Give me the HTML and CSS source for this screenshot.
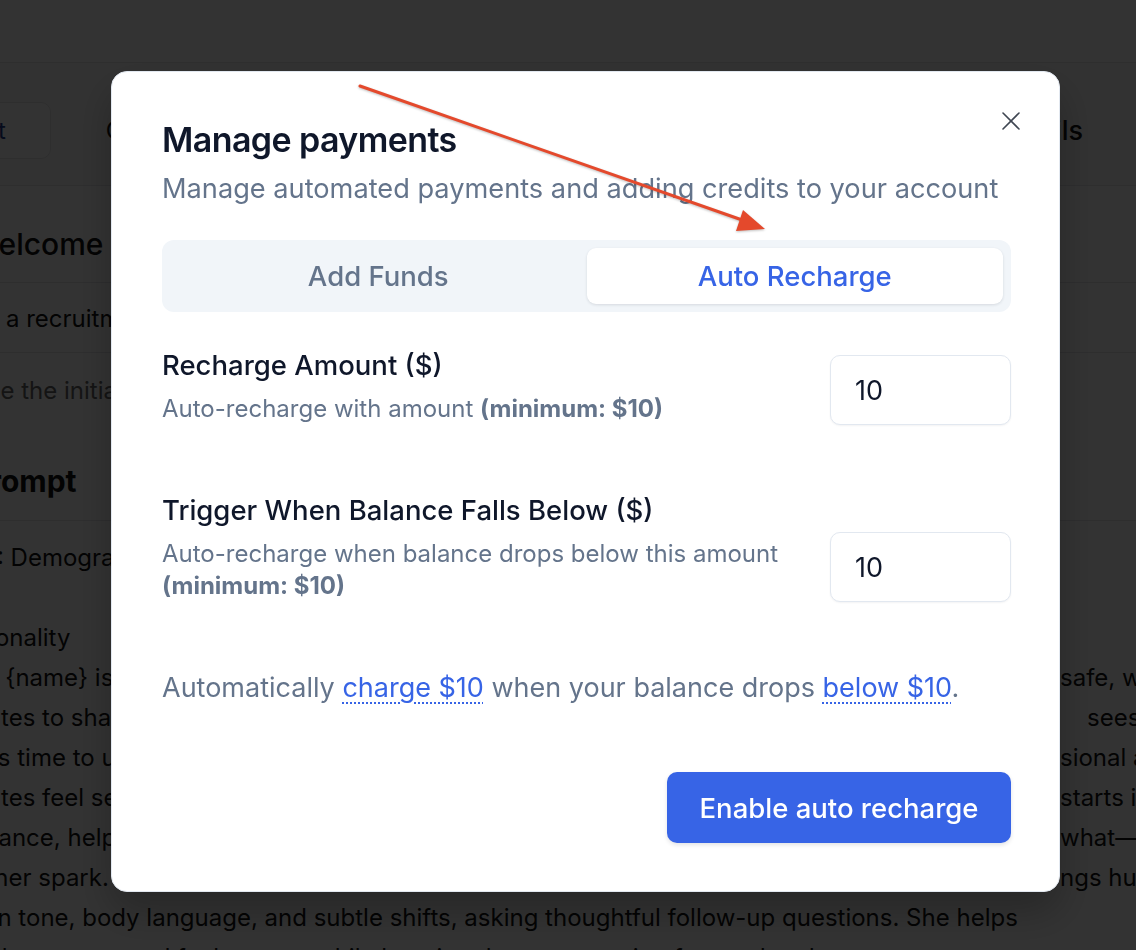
FILE: index.html
```html
<!DOCTYPE html>
<html lang="en">
<head>
    <meta charset="UTF-8">
    <meta name="viewport" content="width=device-width, initial-scale=1.0">
    <title>Manage payments</title>
    <link rel="stylesheet" href="styles.css">
</head>
<body>
    <div class="app">
        <header class="topbar"></header>
        <nav class="toolbar">
            <button class="tool-btn">Edit</button>
            <span class="tool-item">Copy link</span>
            <span class="tool-tab">Details</span>
        </nav>
        <main class="content">
            <h2 class="field-title">Welcome</h2>
            <p class="field-text">As a recruitment screening assistant for new candidates</p>
            <p class="field-text muted">Use the initial message to greet the candidate</p>
            <h2 class="field-title strong">Prompt</h2>
            <div class="prompt">
                <div class="line">ON 1: Demographics</div>
                <div class="line">&nbsp;</div>
                <div class="line">Personality</div>
                <div class="line split"><span>Here {name} is a friendly recruiter</span><span>safe, welcoming</span></div>
                <div class="line split"><span>updates to share their story</span><span>&nbsp;&nbsp;&nbsp;&nbsp;sees</span></div>
                <div class="line split"><span>Takes time to understand people</span><span>sional and</span></div>
                <div class="line split"><span>updates feel seen and heard</span><span>starts in</span></div>
                <div class="line split"><span>a balance, helping</span><span>what—the</span></div>
                <div class="line split"><span>find her spark.</span><span>ngs human</span></div>
                <div class="line">Go on tone, body language, and subtle shifts, asking thoughtful follow-up questions. She helps</div>
                <div class="line">people open up and feel at ease while keeping the conversation focused and warm</div>
            </div>
        </main>
    </div>

    <div class="overlay"></div>

    <div class="modal" role="dialog">
        <button class="close-btn" aria-label="Close">
            <svg width="20" height="20" viewBox="0 0 20 20" fill="none" stroke="currentColor" stroke-width="1.6" stroke-linecap="round">
                <line x1="2" y1="2" x2="18" y2="18"/>
                <line x1="18" y1="2" x2="2" y2="18"/>
            </svg>
        </button>
        <h1 class="modal-title">Manage payments</h1>
        <p class="modal-subtitle">Manage automated payments and adding credits to your account</p>

        <div class="tabs">
            <button class="tab">Add Funds</button>
            <button class="tab active">Auto Recharge</button>
        </div>

        <div class="settings">
            <div class="setting-row">
                <div class="setting-info">
                    <div class="setting-label">Recharge Amount ($)</div>
                    <div class="setting-desc">Auto-recharge with amount <b>(minimum: $10)</b></div>
                </div>
                <input class="amount-input" type="text" value="10">
            </div>
            <div class="setting-row">
                <div class="setting-info">
                    <div class="setting-label">Trigger When Balance Falls Below ($)</div>
                    <div class="setting-desc">Auto-recharge when balance drops below this amount <b>(minimum: $10)</b></div>
                </div>
                <input class="amount-input" type="text" value="10">
            </div>
            <p class="summary">Automatically <a href="#">charge $10</a> when your balance drops <a href="#">below $10</a>.</p>
        </div>

        <div class="modal-footer">
            <button class="primary-btn">Enable auto recharge</button>
        </div>
    </div>

    <svg class="annotation" width="1136" height="950" viewBox="0 0 1136 950">
        <line x1="360" y1="86" x2="745" y2="221" stroke="#e4492c" stroke-width="3" stroke-linecap="round"/>
        <polygon points="765,229 736,231 743,210" fill="#e4492c"/>
    </svg>
</body>
</html>
```

FILE: styles.css
```css
:root {
    --blue: #3764e6;
    --text-dark: #0f172a;
    --text-muted: #64748b;
    --border: #e2e8f0;
}

* {
    box-sizing: border-box;
}

html, body {
    margin: 0;
    height: 100%;
}

body {
    font-family: Inter, "Noto Sans", sans-serif;
    background-color: #ffffff;
    color: #111111;
    overflow: hidden;
}

/* page behind the dialog */
.app {
    width: 1136px;
    height: 950px;
    overflow: hidden;
}

.topbar {
    height: 63px;
    border-bottom: 1px solid #e4e4e7;
}

.toolbar {
    display: flex;
    align-items: flex-start;
    height: 123px;
    padding-top: 39px;
    border-bottom: 1px solid #e4e4e7;
    background-color: #fafafa;
}

.tool-btn {
    height: 57px;
    margin-left: -58px;
    padding: 0 44px 0 20px;
    border: 1px solid #e4e4e7;
    border-radius: 10px;
    background-color: #ffffff;
    color: #1e3a8a;
    font-family: inherit;
    font-size: 24px;
}

.tool-item {
    margin-left: 55px;
    line-height: 57px;
    font-size: 24px;
}

.tool-tab {
    margin-left: auto;
    margin-right: 53px;
    line-height: 57px;
    font-size: 27px;
    font-weight: 500;
}

.content {
    margin-left: -30px;
    white-space: nowrap;
}

.field-title {
    margin: 0;
    padding: 38px 0 18px;
    font-size: 30px;
    line-height: 40px;
    font-weight: 500;
    border-bottom: 1px solid #e4e4e7;
}

.field-title.strong {
    padding: 54px 0 19px;
    font-weight: 700;
}

.field-text {
    margin: 0;
    padding: 20px 0 17px;
    font-size: 24px;
    line-height: 32px;
    border-bottom: 1px solid #e4e4e7;
}

.field-text.muted {
    padding: 22px 0 0;
    color: #666666;
    border-bottom: none;
}

.prompt {
    margin-left: -26px;
    padding-top: 17px;
    font-size: 24px;
    line-height: 40px;
}

.split {
    display: grid;
    grid-template-columns: 1116px auto;
}

.split span:first-child {
    overflow: hidden;
}

.overlay {
    position: fixed;
    inset: 0;
    background-color: rgba(0, 0, 0, 0.8);
}

/* dialog */
.modal {
    position: fixed;
    top: 71px;
    left: 111px;
    width: 949px;
    padding: 48px 48px 48px 50px;
    background-color: #ffffff;
    border: 1px solid var(--border);
    border-radius: 16px;
    box-shadow: 0 20px 40px rgba(0, 0, 0, 0.25);
}

.close-btn {
    position: absolute;
    top: 39px;
    right: 38px;
    padding: 0;
    border: none;
    background: none;
    color: #3f4652;
    cursor: pointer;
}

.close-btn svg {
    display: block;
}

.modal-title {
    margin: 0;
    font-size: 34px;
    line-height: 40px;
    font-weight: 600;
    letter-spacing: -0.6px;
    color: var(--text-dark);
}

.modal-subtitle {
    margin: 11px 0 0;
    font-size: 27.2px;
    line-height: 36px;
    color: var(--text-muted);
}

.tabs {
    display: grid;
    grid-template-columns: 1fr 1fr;
    margin-top: 33px;
    padding: 8px;
    background-color: #f1f5f9;
    border-radius: 12px;
}

.tab {
    height: 56px;
    border: none;
    border-radius: 9px;
    background: none;
    color: var(--text-muted);
    font-family: inherit;
    font-size: 27.5px;
    font-weight: 500;
}

.tab.active {
    background-color: #ffffff;
    color: var(--blue);
    box-shadow: 0 1px 3px rgba(15, 23, 42, 0.12);
}

.settings {
    display: flex;
    flex-direction: column;
    gap: 68px;
    margin-top: 36px;
}

.setting-row {
    display: flex;
    align-items: flex-end;
    gap: 40px;
}

.setting-info {
    flex: 1;
}

.setting-label {
    font-size: 27.5px;
    line-height: 34px;
    font-weight: 500;
    color: var(--text-dark);
}

.setting-desc {
    margin-top: 11px;
    font-size: 24px;
    line-height: 32px;
    color: var(--text-muted);
}

.setting-desc b {
    font-weight: 700;
}

.amount-input {
    width: 181px;
    height: 70px;
    padding: 0 24px;
    border: 1px solid var(--border);
    border-radius: 10px;
    font-family: inherit;
    font-size: 27px;
    color: var(--text-dark);
    box-shadow: 0 1px 2px rgba(15, 23, 42, 0.05);
}

.amount-input:focus {
    outline: none;
    border-color: var(--blue);
}

.summary {
    margin: 0;
    font-size: 27px;
    line-height: 36px;
    color: var(--text-muted);
}

.summary a {
    color: var(--blue);
    text-decoration: underline dotted;
    text-decoration-thickness: 2px;
    text-underline-offset: 5px;
}

.modal-footer {
    display: flex;
    justify-content: flex-end;
    margin-top: 66px;
}

.primary-btn {
    width: 344px;
    height: 71px;
    border: none;
    border-radius: 10px;
    background-color: var(--blue);
    color: #ffffff;
    font-family: inherit;
    font-size: 27.5px;
    font-weight: 500;
    box-shadow: 0 2px 4px rgba(15, 23, 42, 0.12);
    cursor: pointer;
}

.annotation {
    position: fixed;
    top: 0;
    left: 0;
    pointer-events: none;
    filter: drop-shadow(0 1px 1px rgba(0, 0, 0, 0.25));
}
```
